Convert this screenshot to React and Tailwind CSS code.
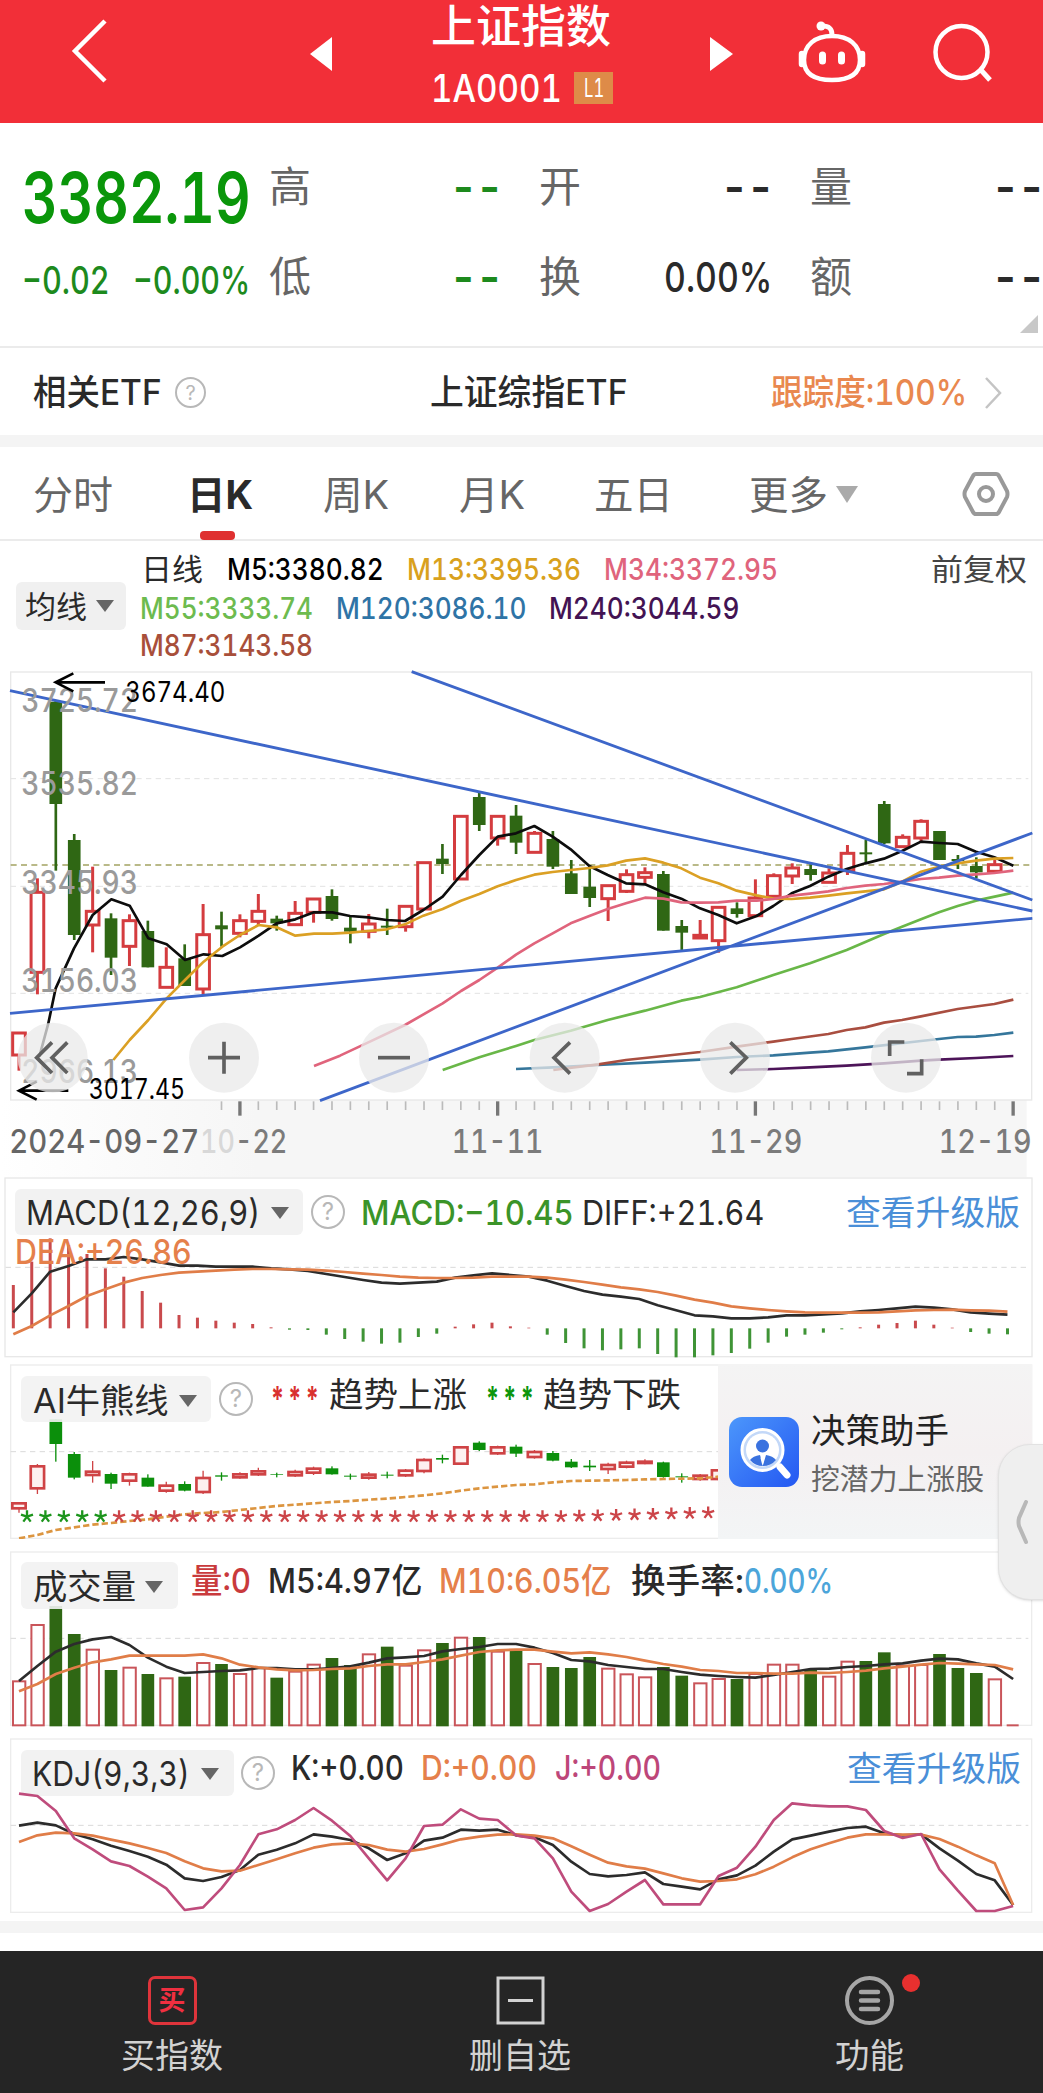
import React, { useLayoutEffect, useRef, useState } from 'react';

const STEP = 55.23;

// kind, high, low, top, bottom of every day
const CANDLES = [
  ['r', 1117, 1232, 1117, 1183], ['r', 655, 1003, 695, 935], ['g', 120, 632, 125, 432], ['g', 522, 840, 540, 825],
  ['r', 620, 877, 752, 793], ['g', 760, 945, 775, 893], ['r', 763, 918, 780, 857], ['g', 782, 922, 813, 922],
  ['r', 862, 980, 920, 980], ['g', 853, 978, 895, 978], ['r', 732, 1003, 822, 985], ['g', 755, 860, 796, 808],
  ['r', 763, 832, 780, 818], ['r', 702, 798, 752, 782], ['g', 767, 812, 776, 790], ['r', 723, 795, 758, 792],
  ['r', 715, 788, 715, 755], ['g', 688, 782, 708, 777], ['g', 770, 850, 803, 815], ['r', 762, 835, 790, 812],
  ['g', 746, 825, 797, 803], ['r', 737, 815, 737, 798], ['r', 606, 745, 606, 745], ['g', 552, 642, 596, 612],
  ['r', 467, 655, 467, 655], ['g', 398, 513, 411, 495], ['r', 467, 557, 467, 532], ['g', 435, 582, 467, 548],
  ['r', 513, 577, 518, 575], ['g', 513, 627, 537, 620], ['g', 600, 702, 640, 702], ['g', 622, 741, 680, 714],
  ['r', 675, 783, 675, 714], ['r', 628, 699, 642, 692], ['r', 622, 672, 636, 650], ['g', 633, 812, 642, 812],
  ['g', 780, 872, 798, 818], ['r', 780, 835, 824, 832], ['r', 738, 878, 740, 840], ['g', 727, 773, 745, 762],
  ['r', 658, 768, 712, 765], ['r', 640, 710, 645, 707], ['r', 610, 672, 622, 646], ['g', 613, 662, 627, 645],
  ['r', 625, 668, 637, 665], ['r', 555, 645, 578, 630], ['g', 540, 608, 577, 583], ['g', 423, 552, 432, 550],
  ['r', 523, 560, 530, 558], ['r', 478, 545, 482, 532], ['g', 513, 600, 513, 600], ['g', 585, 627, 597, 603],
  ['g', 592, 655, 618, 637], ['r', 600, 632, 612, 632],
];

const AI_CANDLES = [
  ['r', 997, 1028, 997, 1018], ['r', 882, 972, 886, 958], ['g', 748, 875, 748, 822], ['g', 846, 928, 852, 923],
  ['r', 873, 938, 902, 918], ['g', 908, 957, 912, 941], ['r', 908, 947, 910, 935], ['g', 913, 950, 923, 950],
  ['r', 935, 968, 944, 965], ['g', 934, 964, 942, 962], ['r', 902, 972, 921, 969], ['g', 907, 932, 916, 920],
  ['r', 907, 926, 910, 925], ['r', 893, 918, 901, 916], ['g', 908, 922, 913, 915], ['r', 899, 921, 903, 919],
  ['r', 890, 915, 893, 911], ['g', 889, 914, 895, 913], ['g', 911, 929, 917, 920], ['r', 906, 929, 911, 926],
  ['g', 905, 925, 914, 917], ['r', 897, 921, 899, 919], ['r', 865, 910, 867, 906], ['g', 854, 880, 864, 869],
  ['r', 829, 884, 829, 884], ['g', 814, 843, 818, 840], ['r', 827, 855, 829, 853], ['g', 824, 861, 830, 851],
  ['r', 840, 866, 843, 864], ['g', 843, 874, 849, 872], ['g', 867, 894, 875, 892], ['g', 870, 903, 887, 892],
  ['r', 878, 912, 882, 900], ['r', 872, 895, 875, 893], ['r', 868, 883, 872, 882], ['g', 875, 923, 877, 921],
  ['g', 910, 938, 919, 922], ['r', 912, 932, 914, 930], ['r', 896, 932, 898, 930],
];

const MA5 = '118,1190 145,1090 167,985 222,865 278,765 334,718 389,737 445,835 500,853 555,900 611,883 667,888 720,862 776,827 830,790 886,778 942,757 997,757 1050,768 1105,772 1160,780 1215,783 1270,750 1328,710 1383,645 1438,585 1493,530 1548,520 1603,498 1658,530 1712,568 1768,618 1823,645 1878,670 1935,673 1990,697 2044,716 2100,745 2155,765 2210,790 2270,768 2320,738 2375,700 2430,678 2485,650 2540,627 2596,610 2652,596 2706,573 2763,545 2817,549 2873,552 2928,575 2983,592 3040,617';
const MA13 = '340,1200 389,1140 445,1080 500,1015 555,960 611,905 667,860 720,825 776,795 830,802 886,827 942,821 997,821 1050,818 1105,813 1160,808 1215,793 1270,767 1328,747 1383,722 1438,702 1493,679 1548,660 1603,644 1658,636 1712,630 1768,624 1823,616 1878,602 1935,595 1990,608 2044,625 2100,653 2155,670 2210,692 2270,706 2320,716 2375,717 2430,713 2485,707 2540,700 2596,694 2652,688 2706,665 2763,635 2817,620 2873,610 2928,602 2983,596 3040,594';
const MA34 = '942,1218 1020,1187 1105,1147 1215,1095 1328,1030 1383,993 1438,960 1493,923 1548,884 1603,850 1658,820 1712,790 1768,768 1823,747 1878,730 1935,713 1990,716 2044,727 2100,728 2155,727 2210,722 2270,722 2320,717 2375,707 2430,701 2485,694 2540,684 2596,677 2652,672 2706,665 2763,657 2817,653 2873,647 2928,643 2983,639 3040,632';
const MA55 = '1328,1230 1438,1192 1548,1158 1603,1140 1712,1112 1823,1080 1935,1052 2044,1022 2100,1011 2210,982 2320,945 2430,910 2540,870 2652,822 2706,800 2763,778 2817,757 2873,738 2928,722 3040,698';
const MA87 = '1660,1230 1795,1213 1878,1200 1990,1188 2100,1176 2210,1160 2320,1145 2375,1137 2485,1122 2540,1110 2596,1102 2652,1088 2706,1080 2763,1069 2873,1047 2983,1032 3040,1019';
const MA120 = '1548,1227 1660,1222 1795,1215 1935,1208 2100,1199 2210,1191 2320,1186 2430,1178 2485,1174 2596,1162 2763,1143 2817,1137 2873,1131 2928,1130 2983,1125 3040,1118';
const MA240 = '2210,1230 2320,1227 2430,1222 2540,1217 2652,1210 2763,1202 2817,1199 2928,1194 3040,1188';

const MACD_BARS = [345, 275, 205, 225, 252, 295, 320, 363, 398, 435, 443, 452, 458, 462, 472, 479, 480, 494, 507, 515, 521, 518, 501, 491, 470, 463, 458, 469, 473, 494, 519, 535, 541, 538, 535, 552, 562, 562, 556, 549, 536, 518, 500, 494, 488, 478, 472, 464, 459, 452, 464, 473, 486, 491, 493];
const DIFF = [427, 370, 305, 288, 268, 268, 261, 268, 277, 287, 287, 290, 290, 290, 295, 298, 303, 312, 321, 330, 338, 341, 338, 335, 323, 316, 310, 315, 320, 332, 348, 363, 374, 380, 387, 406, 421, 436, 439, 445, 445, 442, 436, 436, 433, 430, 424, 420, 415, 410, 413, 418, 427, 431, 434];
const DEA = [493, 468, 436, 408, 378, 358, 338, 324, 315, 308, 305, 302, 299, 297, 297, 298, 299, 302, 306, 311, 315, 320, 323, 324, 324, 323, 320, 320, 320, 323, 329, 336, 344, 352, 358, 366, 377, 389, 398, 409, 415, 420, 424, 427, 428, 428, 428, 427, 424, 421, 420, 419, 421, 422, 425];

const BULL = [1105, 1095, 1080, 1072, 1064, 1059, 1053, 1048, 1040, 1033, 1029, 1026, 1020, 1014, 1008, 1004, 1000, 996, 993, 989, 986, 981, 976, 970, 962, 955, 950, 945, 943, 937, 933, 932, 931, 930, 928, 927, 926, 925, 920];

// falling days are negative
const VOLUME = [392, 223, -168, -252, 297, -360, 351, -372, 383, -380, 337, -342, 370, 352, -383, 363, 342, -324, -345, 311, -290, 345, 299, -279, 261, -261, 303, -300, 340, -351, -354, -321, 354, 371, 380, -351, -377, 398, 385, -387, 370, 342, 342, -360, 378, 333, -333, -307, 345, 343, -312, -354, -369, 386];
const VOL5 = [393, 348, 305, 282, 268, 261, 285, 323, 350, 369, 366, 363, 361, 354, 354, 358, 358, 354, 349, 338, 325, 322, 318, 304, 297, 291, 282, 282, 293, 309, 330, 334, 345, 351, 357, 357, 366, 374, 378, 381, 383, 375, 366, 357, 356, 351, 348, 343, 340, 332, 326, 328, 340, 350, 387];
const VOL10 = [424, 402, 372, 353, 337, 328, 317, 317, 317, 317, 313, 325, 344, 352, 358, 361, 360, 357, 355, 348, 343, 343, 336, 328, 317, 306, 301, 299, 299, 305, 310, 307, 313, 321, 332, 342, 350, 360, 363, 369, 369, 371, 371, 368, 369, 366, 362, 355, 350, 344, 339, 341, 343, 345, 358];

const K = [827, 818, 826, 852, 868, 887, 903, 920, 944, 985, 993, 981, 960, 914, 899, 880, 853, 860, 870, 895, 930, 910, 872, 863, 839, 842, 839, 856, 862, 885, 935, 972, 979, 975, 967, 1002, 1010, 1018, 988, 976, 947, 905, 868, 857, 845, 834, 830, 850, 856, 853, 895, 932, 972, 991, 1065];
const D = [876, 856, 848, 850, 857, 869, 880, 894, 909, 934, 955, 964, 962, 945, 928, 910, 893, 883, 880, 885, 899, 905, 897, 883, 868, 860, 854, 853, 857, 865, 889, 914, 938, 949, 956, 970, 985, 995, 993, 988, 973, 950, 922, 898, 880, 863, 853, 853, 854, 854, 867, 890, 916, 940, 1065];
const J = [731, 738, 783, 865, 898, 934, 948, 980, 1015, 1080, 1072, 1015, 945, 853, 838, 810, 774, 812, 858, 925, 991, 925, 828, 824, 778, 806, 810, 856, 865, 925, 1025, 1083, 1062, 1025, 990, 1063, 1063, 1063, 978, 953, 890, 810, 760, 766, 769, 769, 780, 843, 864, 852, 958, 1022, 1083, 1083, 1068];

const toPoints = (values, x0 = 57) => values.map((v, i) => `${(x0 + i * STEP).toFixed(1)},${v}`).join(' ');

// Stretches its text to the width of the box
const Fit = ({ className, children }) => {
  const box = useRef(null);
  const text = useRef(null);
  const [scale, setScale] = useState(1);

  useLayoutEffect(() => {
    setScale(box.current.clientWidth / text.current.offsetWidth);
  }, []);

  return (
    <span ref={box} className={`block shrink-0 leading-none whitespace-nowrap ${className}`}>
      <span ref={text} className="inline-block origin-left" style={{ transform: `scaleX(${scale})` }}>
        {children}
      </span>
    </span>
  );
};

const Caret = ({ className }) => (
  <svg viewBox="0 0 18 12" preserveAspectRatio="none" className={`shrink-0 ${className}`}>
    <path d="M0 0h18L9 12z" fill="currentColor" />
  </svg>
);

const Help = ({ className }) => (
  <span className={`flex shrink-0 items-center justify-center rounded-full border-2 border-[#b8b8b8] text-[#b8b8b8] leading-none ${className}`}>
    ?
  </span>
);

const Line = ({ points, color, width = 8 }) => (
  <polyline points={points} fill="none" stroke={color} strokeWidth={width} strokeLinejoin="round" />
);

const Grid = ({ y, x1 = 32, x2 = 3085, color = '#d9d9d9' }) => (
  <line x1={x1} x2={x2} y1={y} y2={y} stroke={color} strokeWidth="3" strokeDasharray="16 13" />
);

const Panel = ({ view, className, children, drawing }) => (
  <section className={`relative ${className}`}>
    <svg viewBox={view} className="absolute inset-0 w-full h-full">
      {drawing}
    </svg>
    {children}
  </section>
);

const Header = () => (
  <header className="flex h-[123px] bg-[#f22f38] text-white">
    <svg viewBox="0 0 420 123" className="w-[420px] h-[123px]">
      <path d="M105 21L75 51l30 30" fill="none" stroke="white" strokeWidth="4.5" />
      <path d="M332 37v34l-22-17z" fill="white" />
    </svg>
    <div className="flex w-[204px] flex-col pl-[11px] pt-[4px]">
      <Fit className="w-[180px] text-[45px] font-medium">上证指数</Fit>
      <div className="mt-[20px] flex items-center">
        <Fit className="w-[131px] text-[38px] font-medium">1A0001</Fit>
        <span className="ml-[12px] flex h-[32px] w-[39px] items-center justify-center bg-[#de8b48] text-[25px] leading-none">
          <Fit className="w-[20px]">L1</Fit>
        </span>
      </div>
    </div>
    <svg viewBox="624 0 419 123" className="w-[419px] h-[123px]" fill="none" stroke="white">
      <path d="M710 37v34l23-17z" fill="white" stroke="none" />
      <path d="M832 36c-17 0-28 9-28 24 0 14 10 20 28 20s28-6 28-20c0-15-11-24-28-24z" strokeWidth="4.500" />
      <path d="M832 35c0-7-3-9-10-9" strokeWidth="5" strokeLinecap="round" />
      <circle cx="821" cy="26" r="4.500" fill="white" stroke="none" />
      <path d="M802 54v10M862 54v10" strokeWidth="6.500" strokeLinecap="round" />
      <path d="M822.500 55v6M841.500 55v6" strokeWidth="7" strokeLinecap="round" />
      <circle cx="961.500" cy="52" r="26" strokeWidth="4.500" />
      <path d="M980 69l10 11" strokeWidth="5" />
    </svg>
  </header>
);

const QuoteItem = ({ label, children }) => (
  <div className="flex h-[42px] items-center justify-between">
    <span className="text-[42px] leading-none text-[#666]">{label}</span>
    {children}
  </div>
);

const Dashes = () => <Fit className="w-[52px] text-[48px] font-semibold tracking-[-0.06em]">--</Fit>;

const Quote = () => (
  <section className="relative flex h-[225px] border-b-2 border-[#ebebeb] pl-[22px]">
    <div className="w-[228px] shrink-0 pt-[40px] text-[#0a960a]">
      <Fit className="h-[70px] w-[229px] text-[70px] font-semibold">3382.19</Fit>
      <div className="mt-[28px] flex font-medium text-[#1d8a1d]">
        <Fit className="w-[88px] text-[38px]">−0.02</Fit>
        <Fit className="ml-[23px] w-[117px] text-[38px]">−0.00%</Fit>
      </div>
    </div>
    <div className="ml-[19px] flex gap-[38px] pt-[43px]">
      <div className="flex w-[232px] flex-col gap-[48px] text-[#1d8a1d]">
        <QuoteItem label="高"><Dashes /></QuoteItem>
        <QuoteItem label="低"><Dashes /></QuoteItem>
      </div>
      <div className="flex w-[233px] flex-col gap-[48px] text-[#2a2a2a]">
        <QuoteItem label="开"><Dashes /></QuoteItem>
        <QuoteItem label="换"><Fit className="w-[108px] text-[41px] font-medium">0.00%</Fit></QuoteItem>
      </div>
      <div className="flex w-[233px] flex-col gap-[48px] text-[#2a2a2a]">
        <QuoteItem label="量"><Dashes /></QuoteItem>
        <QuoteItem label="额"><Dashes /></QuoteItem>
      </div>
    </div>
    <svg viewBox="0 0 18 18" className="absolute right-[5px] bottom-[13px] size-[18px]">
      <path d="M18 0v18H0z" fill="#c8c8c8" />
    </svg>
  </section>
);

const EtfRow = () => (
  <section className="flex h-[87px] items-center pl-[33px] pt-[2px] text-[35px] text-[#2a2a2a]">
    <Fit className="w-[129px] font-medium">相关ETF</Fit>
    <Help className="ml-[13px] size-[31px] text-[20px]" />
    <Fit className="ml-[224px] w-[198px] font-medium">上证综指ETF</Fit>
    <Fit className="ml-[143px] w-[196px] font-medium text-[#e9884f]">跟踪度:100%</Fit>
    <svg viewBox="0 0 17 32" className="ml-[18px] h-[32px] w-[17px]">
      <path d="M1 1l14 15L1 31" fill="none" stroke="#c4c4c4" strokeWidth="2.500" />
    </svg>
  </section>
);

const Tabs = () => (
  <nav className="relative flex h-[94px] items-center border-b-2 border-[#ebebeb] pl-[33px] pt-[2px] text-[39px] text-[#666]">
    <Fit className="w-[80px]">分时</Fit>
    <Fit className="ml-[74px] w-[66px] font-bold text-[#2a2a2a]">日K</Fit>
    <Fit className="ml-[70px] w-[66px]">周K</Fit>
    <Fit className="ml-[70px] w-[66px]">月K</Fit>
    <Fit className="ml-[69px] w-[79px]">五日</Fit>
    <Fit className="ml-[76px] w-[79px]">更多</Fit>
    <Caret className="ml-[8px] h-[17px] w-[22px] text-[#aaa]" />
    <svg viewBox="0 0 48 44" className="ml-[104px] h-[44px] w-[48px]" fill="none" stroke="#999" strokeWidth="4">
      <path d="M14 2h20q2 0 3 2l8 15q1 3 0 6l-8 15q-1 2-3 2H14q-2 0-3-2L3 25q-1-3 0-6l8-15q1-2 3-2z" />
      <circle cx="24" cy="22" r="7" />
    </svg>
    <span className="absolute bottom-[-1px] left-[200px] h-[9px] w-[35px] rounded-[4px] bg-[#df3030]" />
  </nav>
);

const Averages = () => (
  <section className="flex h-[119px] pl-[16px] text-[30px]">
    <button className="mt-[41px] flex h-[48px] w-[110px] shrink-0 items-center rounded-md bg-[#f0f0f0] pl-[9px] text-[31px] text-[#2a2a2a]">
      <Fit className="w-[62px]">均线</Fit>
      <Caret className="ml-[9px] h-[12px] w-[18px] text-[#666]" />
    </button>
    <div className="ml-[14px] flex grow flex-col pt-[13px] font-medium">
      <div className="flex h-[40px] items-start">
        <Fit className="ml-[1px] w-[62px] font-normal text-[#2a2a2a]">日线</Fit>
        <Fit className="ml-[24px] w-[157px] text-black">M5:3380.82</Fit>
        <Fit className="ml-[23px] w-[174px] text-[#d9a11d]">M13:3395.36</Fit>
        <Fit className="ml-[23px] w-[174px] text-[#e0647c]">M34:3372.95</Fit>
        <Fit className="ml-[153px] w-[96px] font-normal text-[#444]">前复权</Fit>
      </div>
      <div className="mt-[1px] flex h-[40px] items-start">
        <Fit className="w-[173px] text-[#6dbb4f]">M55:3333.74</Fit>
        <Fit className="ml-[23px] w-[190px] text-[#2f74a6]">M120:3086.10</Fit>
        <Fit className="ml-[23px] w-[190px] text-[#431353]">M240:3044.59</Fit>
      </div>
      <Fit className="w-[173px] text-[#a84f3a]">M87:3143.58</Fit>
    </div>
  </section>
);

const AXIS = [['3725.72', 157], ['3535.82', 404], ['3345.93', 702], ['3156.03', 997], ['2966.13', 1270]];
const BUTTONS = [
  [158, 'M-2 -46L-48 0L-2 46M44 -46L-2 0L44 46'],
  [672, 'M-48 0H48M0 -48V48'],
  [1182, 'M-48 0H48'],
  [1694, 'M16 -46L-32 0L16 48'],
  [2205, 'M-14 -46L34 0L-14 48'],
  [2718, 'M-49 -5V-47H-5M47 5V48H3'],
];

const MainChart = () => (
  <svg viewBox="0 0 3129 1551" className="block h-[517px] w-full">
    <defs>
      <linearGradient id="axis" x1="0" x2="1" y1="0" y2="0">
        <stop offset="0" stopColor="#f6f6f6" stopOpacity="0" />
        <stop offset="0.25" stopColor="#f6f6f6" />
      </linearGradient>
    </defs>
    <rect x="0" y="1320" width="3080" height="231" fill="url(#axis)" />
    <rect x="32" y="36" width="3063" height="1284" fill="white" stroke="#e8e8e8" strokeWidth="4" />
    <Grid y="356" color="#e2e2e2" />
    <Grid y="679" color="#e2e2e2" />
    <Grid y="1000" color="#e2e2e2" />
    <line x1="32" x2="3095" y1="615" y2="615" stroke="#a3a362" strokeWidth="5" strokeDasharray="18 13" />

    {CANDLES.map(([kind, high, low, top, bottom], i) => {
      const x = 57 + i * STEP;
      return kind === 'g' ? (
        <g key={i} fill="#2f6714">
          <rect x={x - 4} y={high} width="8" height={low - high} />
          <rect x={x - 19} y={top} width="38" height={bottom - top} />
        </g>
      ) : (
        <g key={i} stroke="#d43c3f" strokeWidth="9">
          <line x1={x} x2={x} y1={high} y2={low} />
          <rect x={x - 19} y={top + 2} width="38" height={bottom - top} fill="white" />
        </g>
      );
    })}

    <Line points={MA5} color="#0d0d0d" />
    <Line points={MA13} color="#dba024" />
    <Line points={MA34} color="#e0647c" />
    <Line points={MA55} color="#69b748" />
    <Line points={MA120} color="#35769b" />
    <Line points={MA87} color="#a94e40" />
    <Line points={MA240} color="#4d1459" />

    <g stroke="#3d66c9" strokeWidth="8.500">
      <path d="M30 92L3097 753M1235 35L3097 720M30 1060L3097 775M960 1322L3097 519" fill="none" />
    </g>

    {AXIS.map(([label, y]) => (
      <text key={label} x="64" y={y} textLength="350" lengthAdjust="spacingAndGlyphs" fontSize="97" fontWeight="500" fill="#9a9a9a">
        {label}
      </text>
    ))}
    <path d="M315 67H167M220 40L167 67L220 94M205 1292H57M110 1265L57 1292L110 1319" fill="none" stroke="black" strokeWidth="8" />
    <text x="376" y="125" textLength="300" lengthAdjust="spacingAndGlyphs" fontSize="86">3674.40</text>
    <text x="266" y="1318" textLength="289" lengthAdjust="spacingAndGlyphs" fontSize="86">3017.45</text>

    {BUTTONS.map(([x, d]) => (
      <g key={x} transform={`translate(${x} 1193)`}>
        <circle r="105" fill="#e9e9e9" fillOpacity="0.75" />
        <path d={d} fill="none" stroke="#606060" strokeWidth="11" />
      </g>
    ))}

    {Array.from({ length: 44 }, (_, n) => n + 11).map((i) => {
      const x = 57 + i * STEP;
      const long = (i - 12) % 14 === 0;
      return <line key={i} x1={x} x2={x} y1="1324" y2={long ? 1367 : 1350} stroke={long ? '#777' : '#bbb'} strokeWidth={long ? 10 : 5} />;
    })}

    <g fontSize="98" fontWeight="500" fill="#7b7b7b">
      <text x="600" y="1478" textLength="262" lengthAdjust="spacingAndGlyphs">
        <tspan fill="#d8d8d8">10</tspan>-22
      </text>
      <text x="28" y="1478" textLength="570" lengthAdjust="spacingAndGlyphs" fill="#666">2024-09-27</text>
      <text x="1355" y="1478" textLength="275" lengthAdjust="spacingAndGlyphs">11-11</text>
      <text x="2128" y="1478" textLength="279" lengthAdjust="spacingAndGlyphs">11-29</text>
      <text x="2816" y="1478" textLength="279" lengthAdjust="spacingAndGlyphs">12-19</text>
    </g>
  </svg>
);

const MacdPanel = () => (
  <Panel
    view="0 21 3129 543"
    className="h-[181px]"
    drawing={
      <>
        <rect x="15" y="24" width="3081" height="536" fill="white" stroke="#e8e8e8" strokeWidth="4" />
        <Grid y="292" x1={17} />
        {MACD_BARS.map((y, i) => (
          <line key={i} x1={40 + i * STEP} x2={40 + i * STEP} y1="475" y2={y} stroke={y < 475 ? '#c94a4d' : '#3f9436'} strokeWidth="9" />
        ))}
        <Line points={toPoints(DIFF, 40)} color="#2c2c2c" />
        <Line points={toPoints(DEA, 40)} color="#e07d48" />
      </>
    }
  >
    <div className="relative flex pt-[12px] pl-[15px] text-[34px] text-[#2a2a2a]">
      <button className="flex h-[46px] w-[288px] items-center rounded-md bg-[#f2f2f2] pt-[2px] pl-[11px]">
        <Fit className="w-[234px]">MACD(12,26,9)</Fit>
        <Caret className="ml-[11px] h-[12px] w-[18px] text-[#666]" />
      </button>
      <Help className="mt-[6px] ml-[8px] size-[34px] text-[24px]" />
      <Fit className="mt-[7px] ml-[16px] w-[213px] font-medium text-[#3b9428]">MACD:−10.45</Fit>
      <Fit className="mt-[7px] ml-[8px] w-[182px]">DIFF:+21.64</Fit>
      <Fit className="mt-[7px] ml-[82px] w-[174px] text-[#4a8fd8]">查看升级版</Fit>
    </div>
    <Fit className="relative ml-[15px] w-[177px] text-[34px] font-medium text-[#e5804b]">DEA:+26.86</Fit>
  </Panel>
);

const AiPanel = () => (
  <Panel
    view="0 582 3129 525"
    className="mt-[6px] h-[175px]"
    drawing={
      <>
        <rect x="32" y="585" width="3063" height="520" fill="white" stroke="#ececec" strokeWidth="4" />
        <Grid y="845" />
        {AI_CANDLES.map(([kind, high, low, top, bottom], i) => {
          const x = 57 + i * STEP;
          return kind === 'g' ? (
            <g key={i} fill="#0b8f0b">
              <rect x={x - 2} y={high} width="4" height={low - high} />
              <rect x={x - 19} y={top} width="38" height={bottom - top} />
            </g>
          ) : (
            <g key={i} stroke="#cf4345">
              <line x1={x} x2={x} y1={high} y2={low} strokeWidth="4" />
              <rect x={x - 20} y={top + 3} width="40" height={bottom - top - 6} fill="#fdf1f0" strokeWidth="8" />
            </g>
          );
        })}
        <polyline points={toPoints(BULL)} fill="none" stroke="#dc9540" strokeWidth="8" strokeDasharray="19 9" />
        {BULL.map((_, i) => (
          <path
            key={i}
            transform={`translate(${81 + i * STEP} ${i < 30 ? 1040 : 1040 - (i - 29) * 1.4})`}
            d="M0 0V-19M0 0L-18 -6M0 0L18 -6M0 0L-11 15M0 0L11 15"
            stroke={i < 5 ? '#1c951c' : '#cc4448'}
            strokeWidth="7"
          />
        ))}
      </>
    }
  >
    <div className="relative flex pt-[12px] pl-[21px] text-[34px] text-[#2a2a2a]">
      <button className="flex h-[46px] w-[190px] items-center rounded-md bg-[#f2f2f2]/90 pt-[3px] pl-[11px]">
        <Fit className="w-[136px]">AI牛熊线</Fit>
        <Caret className="ml-[11px] h-[12px] w-[18px] text-[#666]" />
      </button>
      <Help className="mt-[6px] ml-[8px] size-[34px] text-[24px]" />
      <Fit className="mt-[6px] ml-[17px] w-[52px] font-bold tracking-[0.1em] text-[#d9302f]">***</Fit>
      <Fit className="mt-[2px] ml-[7px] w-[138px]">趋势上涨</Fit>
      <Fit className="mt-[6px] ml-[18px] w-[52px] font-bold tracking-[0.1em] text-[#0c960c]">***</Fit>
      <Fit className="mt-[2px] ml-[6px] w-[138px]">趋势下跌</Fit>
    </div>
    <aside className="absolute top-0 left-[718px] flex h-[175px] w-[314px] items-center bg-linear-to-b from-[#f4f4f4] via-[#f4f0f1] to-[#f3f5f6] pl-[11px]">
      <svg viewBox="0 0 70 70" className="size-[70px] shrink-0">
        <defs>
          <linearGradient id="assistant" x1="0" x2="1" y1="0" y2="1">
            <stop offset="0" stopColor="#4c97fb" />
            <stop offset="1" stopColor="#2457f2" />
          </linearGradient>
        </defs>
        <rect width="70" height="70" rx="13" fill="url(#assistant)" />
        <path d="M51 50l7 8" stroke="white" strokeWidth="7" strokeLinecap="round" />
        <circle cx="33.500" cy="33" r="20.500" fill="#c3d8f8" stroke="white" strokeWidth="3" />
        <circle cx="33.500" cy="33" r="16.500" fill="white" />
        <circle cx="33.500" cy="29" r="6.500" fill="#3a72df" />
        <path d="M21 43q3-4 10-5l3 10 3-10q7 1 10 5-5 6-13 6t-13-6z" fill="#3a72df" />
        <path d="M33.500 38l2 3-2 8-2-8z" fill="white" />
      </svg>
      <div className="ml-[12px] flex flex-col gap-[17px] pt-[4px]">
        <Fit className="w-[138px] text-[34px] text-[#222]">决策助手</Fit>
        <Fit className="w-[173px] text-[29px] text-[#666]">挖潜力上涨股</Fit>
      </div>
    </aside>
    <button className="absolute top-[80px] left-[998px] z-10 flex h-[156px] w-[60px] items-center rounded-l-[32px] border border-[#e2e2e2] bg-[#efefef] pl-[17px] shadow-sm">
      <svg viewBox="0 0 12 44" className="h-[44px] w-[12px]">
        <path d="M10 2L3 18q-1 4 0 8l7 16" fill="none" stroke="#b8b8b8" strokeWidth="4" strokeLinecap="round" />
      </svg>
    </button>
  </Panel>
);

const VolumePanel = () => (
  <Panel
    view="0 3 3129 528"
    className="mt-[12px] h-[176px]"
    drawing={
      <>
        <rect x="32" y="6" width="3063" height="520" fill="white" stroke="#ececec" strokeWidth="4" />
        <Grid y="265" />
        {VOLUME.map((v, i) => {
          const x = 57 + i * STEP;
          return v < 0 ? (
            <rect key={i} x={x - 19} y={-v} width="38" height={529 + v} fill="#2f6714" />
          ) : (
            <rect key={i} x={x - 18} y={v + 2} width="37" height={524 - v} fill="white" stroke="#c9555a" strokeWidth="6" />
          );
        })}
        <line x1="3020" x2="3056" y1="526" y2="526" stroke="#c9555a" strokeWidth="6" />
        <Line points={toPoints(VOL5)} color="#2c2c2c" />
        <Line points={toPoints(VOL10)} color="#e07d48" />
      </>
    }
  >
    <div className="relative flex pt-[11px] pl-[21px] text-[34px] text-[#2a2a2a]">
      <button className="flex h-[47px] w-[157px] items-center rounded-md bg-[#f2f2f2]/90 pt-[3px] pl-[11px]">
        <Fit className="w-[103px]">成交量</Fit>
        <Caret className="ml-[10px] h-[12px] w-[18px] text-[#666]" />
      </button>
      <Fit className="mt-[2px] ml-[13px] w-[60px] font-medium text-[#c93a3c]">量:0</Fit>
      <Fit className="mt-[2px] ml-[17px] w-[154px] font-medium">M5:4.97亿</Fit>
      <Fit className="mt-[2px] ml-[17px] w-[172px] font-medium text-[#e5804b]">M10:6.05亿</Fit>
      <Fit className="mt-[2px] ml-[20px] w-[113px] font-medium">换手率:</Fit>
      <Fit className="mt-[2px] w-[89px] font-medium text-[#4ca5da]">0.00%</Fit>
    </div>
  </Panel>
);

const KdjPanel = () => (
  <Panel
    view="0 564 3129 525"
    className="mt-[11px] h-[175px]"
    drawing={
      <>
        <rect x="32" y="567" width="3063" height="520" fill="white" stroke="#ececec" strokeWidth="4" />
        <Grid y="826" />
        <Line points={toPoints(K)} color="#2c2c2c" />
        <Line points={toPoints(D)} color="#e07d48" />
      </>
    }
  >
    <div className="relative flex pt-[12px] pl-[21px] text-[34px] text-[#2a2a2a]">
      <button className="flex h-[46px] w-[213px] items-center rounded-md bg-[#f2f2f2] pt-[2px] pl-[11px]">
        <Fit className="w-[158px]">KDJ(9,3,3)</Fit>
        <Caret className="ml-[11px] h-[12px] w-[18px] text-[#666]" />
      </button>
      <Help className="mt-[6px] ml-[7px] size-[34px] text-[24px]" />
      <Fit className="mt-[1px] ml-[16px] w-[113px] font-medium">K:+0.00</Fit>
      <Fit className="mt-[1px] ml-[17px] w-[116px] font-medium text-[#e5804b]">D:+0.00</Fit>
      <Fit className="mt-[1px] ml-[18px] w-[106px] font-medium text-[#bd4679]">J:+0.00</Fit>
      <Fit className="mt-[2px] ml-[186px] w-[174px] text-[#4a8fd8]">查看升级版</Fit>
    </div>
    <svg viewBox="0 564 3129 525" className="absolute inset-0 h-full w-full">
      <Line points={toPoints(J)} color="#bf4c7c" />
    </svg>
  </Panel>
);

const BottomBar = () => (
  <footer className="flex h-[142px] justify-between bg-[#252525] pt-[25px] text-[34px] text-[#d2d2d2]">
    <div className="flex w-[344px] flex-col items-center">
      <span className="flex size-[49px] items-center justify-center rounded-[7px] border-3 border-[#df343b] text-[27px] leading-none font-bold text-[#f02f40]">
        买
      </span>
      <Fit className="mt-[14px] w-[102px]">买指数</Fit>
    </div>
    <div className="flex w-[352px] flex-col items-center">
      <svg viewBox="0 0 49 49" className="size-[49px]" fill="none" stroke="#d2d2d2" strokeWidth="3">
        <path d="M2 2h45v45H2zM12 24.500h25" />
      </svg>
      <Fit className="mt-[14px] w-[102px]">删自选</Fit>
    </div>
    <div className="relative flex w-[347px] flex-col items-center">
      <svg viewBox="0 0 49 49" className="size-[49px]" fill="none" stroke="#a6a6a6">
        <circle cx="24.500" cy="24.500" r="22.500" strokeWidth="4" />
        <path d="M16 16h17M16 24.500h17M16 33h17" strokeWidth="4.500" strokeLinecap="round" />
      </svg>
      <Fit className="mt-[14px] w-[69px]">功能</Fit>
      <span className="absolute top-[-2px] left-[206px] size-[18px] rounded-full bg-[#e8302f]" />
    </div>
  </footer>
);

export default function App() {
  return (
    <main className="w-[1043px] overflow-hidden bg-white font-['Inter','Noto_Sans_CJK_SC',sans-serif] tabular-nums">
      <Header />
      <Quote />
      <EtfRow />
      <div className="h-[12px] bg-[#f4f4f4]" />
      <Tabs />
      <Averages />
      <MainChart />
      <MacdPanel />
      <AiPanel />
      <VolumePanel />
      <KdjPanel />
      <div className="mt-[8px] mb-[18px] h-[12px] bg-[#f4f4f4]" />
      <BottomBar />
    </main>
  );
}
